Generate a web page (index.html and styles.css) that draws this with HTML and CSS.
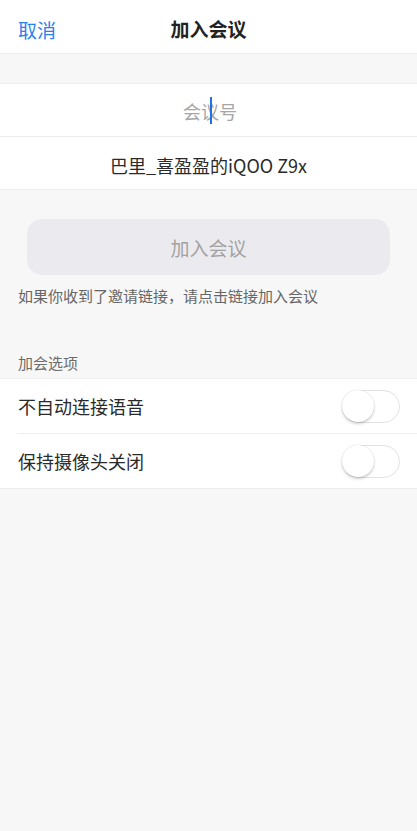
FILE: index.html
```html
<!DOCTYPE html>
<html lang="zh">
<head>
<meta charset="utf-8">
<link rel="stylesheet" href="styles.css">
</head>
<body>
<div class="page">
  <header class="nav">
    <span class="cancel">取消</span>
    <span class="title">加入会议</span>
  </header>
  <div class="spacer"></div>
  <div class="field field-id">
    <span class="placeholder">会<span class="caret-wrap">议<span class="caret"></span></span>号</span>
  </div>
  <div class="field field-name">
    <span class="name">巴里_喜盈盈的iQOO Z9x</span>
  </div>
  <div class="actions">
    <button class="join-btn">加入会议</button>
    <p class="hint">如果你收到了邀请链接，请点击链接加入会议</p>
  </div>
  <div class="section-label">加会选项</div>
  <div class="options">
    <div class="option">
      <span class="option-text">不自动连接语音</span>
      <span class="toggle"><span class="knob"></span></span>
    </div>
    <div class="option">
      <span class="option-text">保持摄像头关闭</span>
      <span class="toggle"><span class="knob"></span></span>
    </div>
  </div>
</div>
</body>
</html>
```
FILE: styles.css
```css
html, body {
  margin: 0;
  padding: 0;
}
body {
  background: #f7f7f7;
  font-family: "Noto Sans CJK SC", "Noto Sans", sans-serif;
  width: 417px;
  height: 831px;
  overflow: hidden;
}
.page {
  display: flex;
  flex-direction: column;
}
.nav {
  position: relative;
  height: 54px;
  background: #fff;
  border-bottom: 1px solid #ececec;
  box-sizing: border-box;
  display: flex;
  align-items: center;
  justify-content: center;
  padding-top: 4px;
}
.cancel {
  position: absolute;
  left: 18px;
  top: 17px;
  font-size: 19px;
  line-height: 26px;
  color: #2b7ff0;
}
.title {
  font-size: 19px;
  font-weight: 700;
  color: #222;
  line-height: 26px;
}
.spacer {
  height: 29px;
}
.field {
  background: #fff;
  display: flex;
  align-items: center;
  justify-content: center;
  box-sizing: border-box;
}
.field-id {
  height: 54px;
  border-bottom: 1px solid #ececec;
  border-top: 1px solid #efefef;
  padding-top: 1px;
}
.field-name {
  height: 53px;
  border-bottom: 1px solid #ececec;
  padding-top: 4px;
}
.placeholder {
  font-size: 18px;
  color: #a6a6a6;
  line-height: 26px;
  padding-left: 3px;
}
.caret-wrap {
  position: relative;
}
.caret {
  position: absolute;
  left: 9px;
  top: -1px;
  width: 2px;
  height: 27px;
  background: #1f6fe8;
}
.name {
  font-size: 18px;
  color: #2a2a2a;
  line-height: 26px;
}
.actions {
  padding: 29px 27px 0;
}
.join-btn {
  display: block;
  width: 100%;
  height: 56px;
  border: none;
  border-radius: 15px;
  background: #ebebef;
  color: #a2a2a2;
  font-family: inherit;
  font-size: 19px;
  padding: 0;
}
.hint {
  margin: 10px 0 0 -9px;
  font-size: 15px;
  line-height: 22px;
  color: #666;
}
.section-label {
  margin-top: 45px;
  padding-left: 18px;
  font-size: 15px;
  line-height: 22px;
  color: #6b6b6b;
  height: 22px;
  padding-bottom: 4px;
}
.options {
  background: #fff;
  border-top: 1px solid #efefef;
  border-bottom: 1px solid #ececec;
}
.option {
  height: 54px;
  display: flex;
  align-items: center;
  justify-content: space-between;
  padding: 0 17px 0 18px;
  position: relative;
}
.option + .option {
  border-top: 1px solid #eeeeee;
  margin-left: 17px;
  padding-left: 1px;
}
.option-text {
  font-size: 18px;
  color: #2a2a2a;
  line-height: 26px;
}
.toggle {
  width: 58px;
  height: 33px;
  border-radius: 17px;
  border: 1.5px solid #e2e2e2;
  box-sizing: border-box;
  background: #fff;
  position: relative;
}
.knob {
  position: absolute;
  left: -1px;
  top: -1px;
  width: 32px;
  height: 32px;
  border-radius: 50%;
  background: #fff;
  box-shadow: 0 2px 3px rgba(0,0,0,0.18), 0 0 0 0.5px rgba(0,0,0,0.08);
}
```
